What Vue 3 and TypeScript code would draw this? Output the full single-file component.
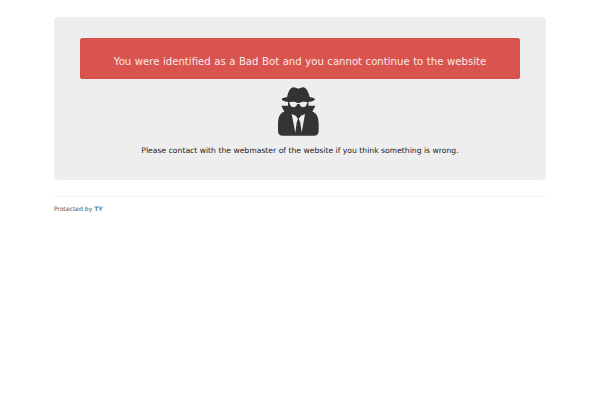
<script setup lang="ts">
import {ref} from "vue";

const message = ref("You were identified as a Bad Bot and you cannot continue to the website")
const contact = ref("Please contact with the webmaster of the website if you think something is wrong.")
const vendor = ref("TY")
</script>

<template>
  <div class="container">
    <div class="jumbotron">
      <div class="alert">{{ message }}</div>
      <svg class="spy" viewBox="30 22 123 147" width="41" height="49">
        <path fill="#333" d="M57 53 C61 36 67 23 77 23 C83 23 86 27 91 27 C96 27 99 23 105 23 C115 23 121 37 125 52 C134 54 141 56 141 59 C141 65 120 69 91 69 C62 69 41 65 41 59 C41 56 48 54 57 53 Z"/>
        <path fill="#333" d="M60 66 L121 66 L122 78 L142 78 L133 96 C145 99 152 111 152 134 L152 153 C152 163 147 168 137 168 L45 168 C35 168 30 163 30 153 L30 134 C30 111 37 99 49 96 L40 78 L60 78 Z"/>
        <path fill="#eee" d="M63 68 C72 65 82 66 88 70 L94 70 C100 66 110 65 119 68 L114 78 C110 84 99 84 96 77 L94 73 L88 73 L86 77 C83 84 72 84 68 78 Z"/>
        <path fill="#eee" d="M71 103 L83 108 L90 117 L86 129 L82 159 Z M111 103 L99 108 L92 117 L97 129 L101 159 Z"/>
      </svg>
      <p class="contact">{{ contact }}</p>
    </div>
    <hr>
    <footer>Protected by <a>{{ vendor }}</a></footer>
  </div>
</template>

<style>
body {
  background: #fff;
}
</style>

<style scoped>
.container {
  width: 492px;
  margin: 0 auto;
  padding-top: 17px;
  font-family: "DejaVu Sans", Verdana, sans-serif;
}

.jumbotron {
  box-sizing: border-box;
  height: 163px;
  padding: 21px 26px 0;
  border-radius: 4px;
  background: #eee;
  text-align: center;
}

.alert {
  box-sizing: border-box;
  height: 41px;
  border: 1px solid #d6514c;
  border-radius: 2px;
  background: #d9534f;
  color: #fbe9e7;
  font-size: 10.15px;
  font-variant-ligatures: none;
  word-spacing: 0.3px;
  line-height: 45px;
  white-space: nowrap;
}

.spy {
  display: block;
  margin: 8px auto 0;
  position: relative;
  left: -1.5px;
}

.contact {
  margin: 8px 0 0;
  color: #222;
  font-size: 7.67px;
  line-height: 14px;
  white-space: nowrap;
}

hr {
  margin: 16px 0 0;
  border: 0;
  border-top: 1px solid #f4f4f4;
}

footer {
  margin-top: 6px;
  color: #555;
  font-size: 6.1px;
  letter-spacing: -0.03px;
  line-height: 11px;
}

a {
  color: #4a8fb8;
  font-weight: bold;
}
</style>
